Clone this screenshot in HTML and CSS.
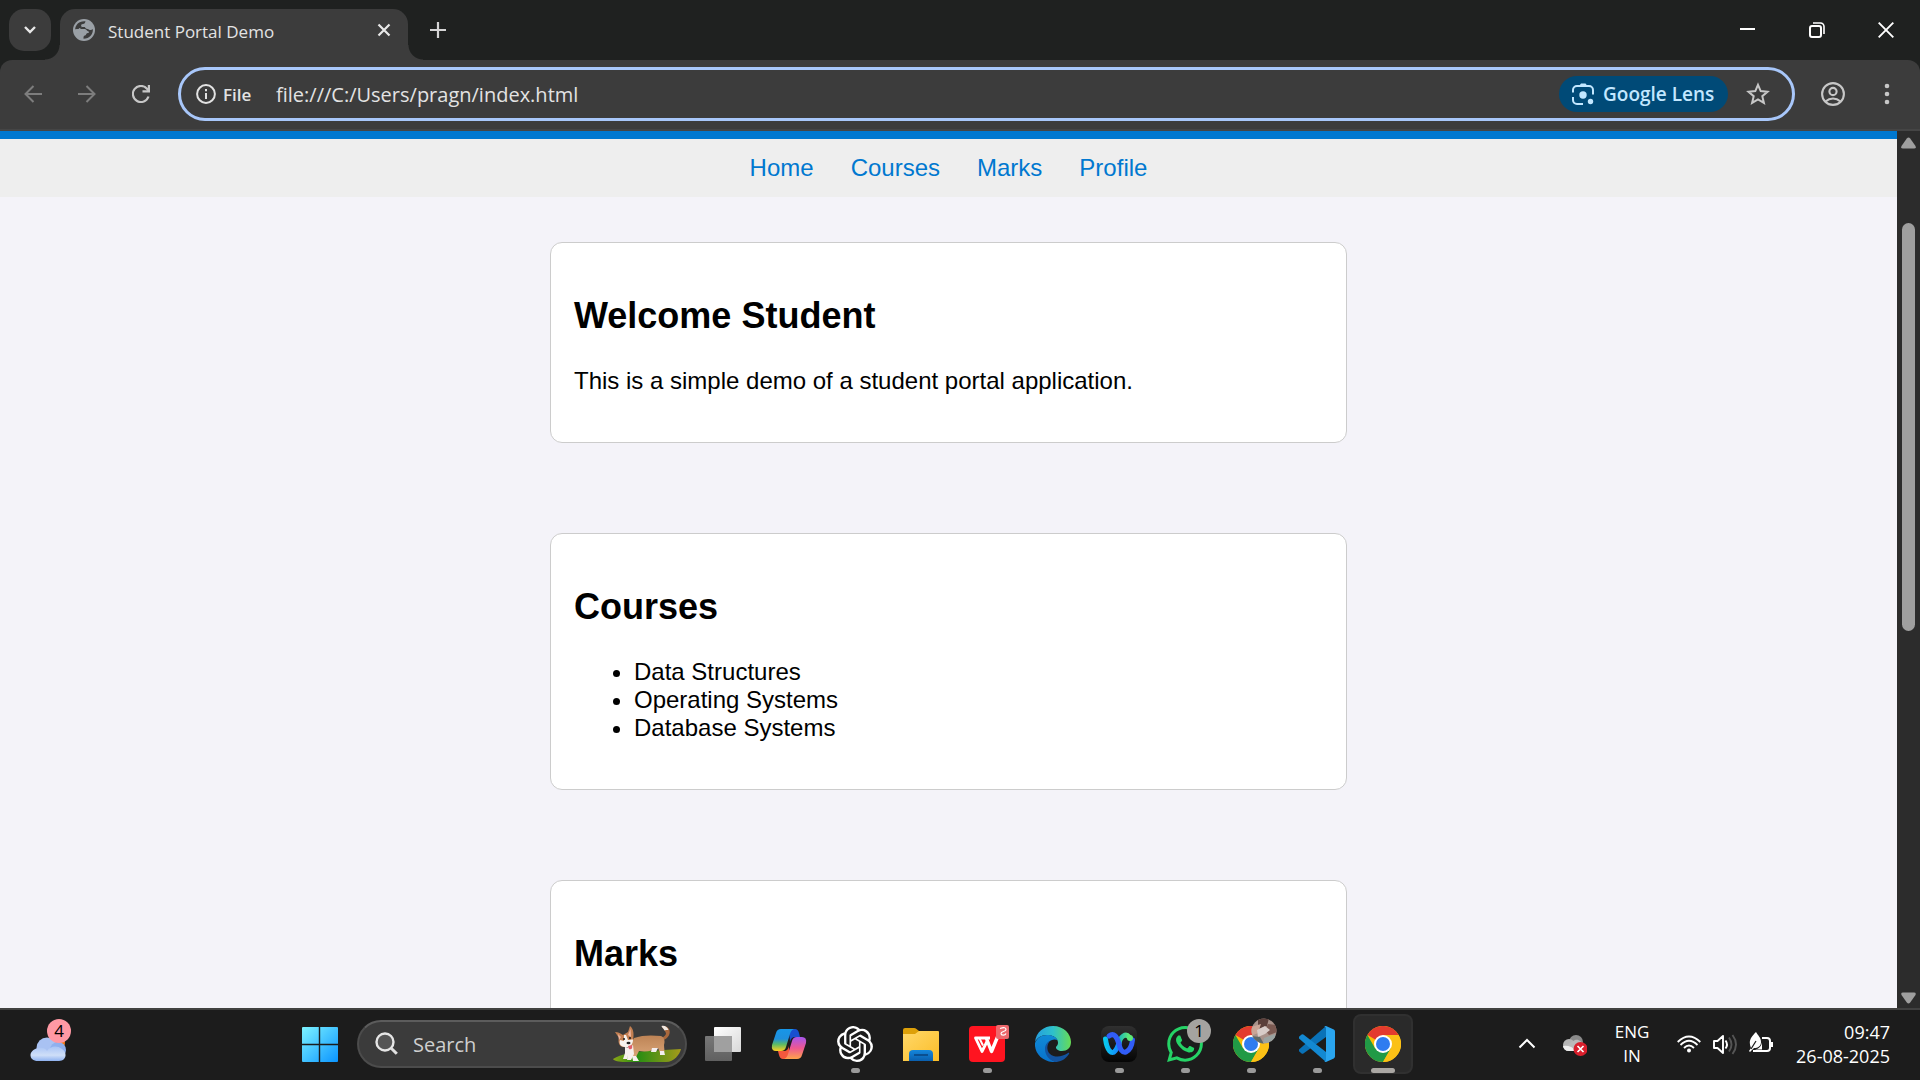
FILE: index.html
```html
<!DOCTYPE html>
<html lang="en">
<head>
<meta charset="utf-8">
<title>Student Portal Demo</title>
<link rel="stylesheet" href="styles.css">
</head>
<body>
<header class="tabstrip">
  <button class="tab-search" aria-label="Search tabs"><svg width="14" height="14" viewBox="0 0 14 14"><path d="M2 4l5 5 5-5" fill="none" stroke="#e8e8e8" stroke-width="2.4"/></svg></button>
  <div class="tab">
    <svg width="22" height="22" viewBox="0 0 22 22"><circle cx="11" cy="11" r="11" fill="#9aa0a6"/><path d="M12.500 2.200c-.3 1.300-1 2.800-2.500 2.800-1.700 0-2.500 1-1.500 2.500.5 1-.5 1.500-2 1.500L5.500 10l-3.300.5C2.200 6 6 1.500 12.500 2.200z" fill="#3c3c3c"/><path d="M2.200 10.500l3.300-.5c3 0 6 0 7.500 1 1 1 .5 2.500-1 2.500-1.500.5-1.500 2-2.500 3-1 .8-1 2-1 3C4.500 18.200 2 14.800 2.200 10.500z" fill="#9aa0a6"/><path d="M7 10h5c1.500 0 2 2.500 3.500 2.500 1 0 .5 1.500-.5 1.500-2 0-1.500 2-3 2.500-1.500 0-1.500 1.500-1.500 3.300 6 0 10-5 9.300-9.800-1 1-2.500 1.500-4 .5-1.500-1-3.500-.5-4-2.500H8.500z" fill="#3c3c3c"/></svg>
    <span class="tab-title">Student Portal Demo</span>
    <button class="plain tab-close" aria-label="Close tab"><svg width="14" height="14" viewBox="0 0 14 14"><path d="M1.500 1.500l11 11M12.500 1.500l-11 11" stroke="#e8e8e8" stroke-width="2.200"/></svg></button>
  </div>
  <button class="plain new-tab" aria-label="New tab"><svg width="16" height="16" viewBox="0 0 16 16"><path d="M8 0v16M0 8h16" stroke="#d5d5d5" stroke-width="2.200"/></svg></button>
  <div class="window-controls">
    <button class="plain" aria-label="Minimize"><svg width="16" height="16" viewBox="0 0 16 16"><path d="M0 7h15" stroke="#fff" stroke-width="2"/></svg></button>
    <button class="plain" aria-label="Restore"><svg width="16" height="16" viewBox="0 0 16 16"><rect x="1" y="4" width="11" height="11" rx="2" fill="none" stroke="#fff" stroke-width="2"/><path d="M4 1h7.500a3.500 3.500 0 0 1 3.500 3.500V12" fill="none" stroke="#fff" stroke-width="1.600"/></svg></button>
    <button class="plain" aria-label="Close"><svg width="16" height="16" viewBox="0 0 16 16"><path d="M.7.7l14.600 14.600M15.300.7L.7 15.300" stroke="#fff" stroke-width="1.900"/></svg></button>
  </div>
</header>

<div class="toolbar">
  <div class="nav-buttons">
    <button class="plain" aria-label="Back"><svg width="18" height="18" viewBox="0 0 18 18"><path d="M18 9H1.500M9.500 1L1.500 9l8 8" fill="none" stroke="#7d7d7d" stroke-width="2"/></svg></button>
    <button class="plain" aria-label="Forward"><svg width="18" height="18" viewBox="0 0 18 18"><path d="M0 9h16.500M8.500 1l8 8-8 8" fill="none" stroke="#7d7d7d" stroke-width="2"/></svg></button>
    <button class="plain" aria-label="Reload"><svg width="18" height="18" viewBox="0 0 18 18"><path d="M16.500 11.500A8 8 0 1 1 15 3.800l1.500 1.700" fill="none" stroke="#c7c7c7" stroke-width="2.200"/><path d="M18 0v7.500h-7.500V5.300h5.300V0z" fill="#c7c7c7"/></svg></button>
  </div>
  <div class="omnibox">
    <svg width="20" height="20" viewBox="0 0 20 20"><circle cx="10" cy="10" r="8.900" fill="none" stroke="#e3e3e3" stroke-width="2"/><path d="M9 9h2v6H9zM9 5h2v2.200H9z" fill="#e3e3e3"/></svg>
    <label class="scheme" for="url">File</label>
    <input class="url" id="url" type="text" value="file:///C:/Users/pragn/index.html">
    <button class="lens"><svg width="22" height="22" viewBox="0 0 22 22"><g fill="none" stroke="#c2e7ff" stroke-width="2"><path d="M1 9.500V7a4 4 0 0 1 4-4h12a4 4 0 0 1 4 4v4.500M1 14v3a4 4 0 0 0 4 4h6"/></g><path d="M7 3L9 .5h4.500l2 2.500z" fill="#c2e7ff"/><circle cx="11" cy="12" r="3.700" fill="#c2e7ff"/><circle cx="18.500" cy="18.500" r="2.700" fill="#c2e7ff"/></svg>Google Lens</button>
    <button class="plain star" aria-label="Bookmark this tab"><svg width="24" height="24" viewBox="0 0 24 24"><path d="M12 2.800l2.700 6.300 6.800.6-5.200 4.500 1.600 6.700L12 17.300l-5.900 3.600 1.600-6.700-5.200-4.500 6.800-.6z" fill="none" stroke="#c7c7c7" stroke-width="2"/></svg></button>
  </div>
  <button class="plain" aria-label="Profile"><svg width="24" height="24" viewBox="0 0 24 24"><g fill="none" stroke="#c7c7c7" stroke-width="2.100"><circle cx="12" cy="12" r="10.900"/><circle cx="12" cy="9.500" r="3.600"/><path d="M4.500 19.500c4.500-4 10.500-4 15 0"/></g></svg></button>
  <button class="plain menu" aria-label="Menu"><svg width="6" height="22" viewBox="0 0 6 22"><g fill="#c7c7c7"><circle cx="3" cy="3" r="2.300"/><circle cx="3" cy="11" r="2.300"/><circle cx="3" cy="19" r="2.300"/></g></svg></button>
</div>

<div class="viewport">
  <main class="page">
    <nav class="site-nav"><a href="#home">Home</a><a href="#courses">Courses</a><a href="#marks">Marks</a><a href="#profile">Profile</a></nav>
    <section class="card" id="home">
      <h2>Welcome Student</h2>
      <p>This is a simple demo of a student portal application.</p>
    </section>
    <section class="card" id="courses">
      <h2>Courses</h2>
      <ul><li>Data Structures</li><li>Operating Systems</li><li>Database Systems</li></ul>
    </section>
    <section class="card" id="marks">
      <h2>Marks</h2>
    </section>
  </main>
  <div class="scrollbar">
    <svg width="15" height="12" viewBox="0 0 15 12"><path d="M5.800 1.500q1.700-2.200 3.400 0l5.300 7.500q1 2.400-1.500 2.500H2Q-.5 11.400.5 9z" fill="#9f9f9f"/></svg>
    <div class="track"><div class="thumb"></div></div>
    <svg width="15" height="12" viewBox="0 0 15 12"><path d="M5.800 10.500q1.700 2.200 3.400 0L14.500 3q1-2.400-1.500-2.500H2Q-.5.600.5 3z" fill="#9f9f9f"/></svg>
  </div>
</div>

<footer class="taskbar">
  <button class="app weather" aria-label="Widgets"><svg width="36" height="36" viewBox="0 0 36 36"><defs><linearGradient id="cl" x2="0" y2="1"><stop offset="0" stop-color="#a9c4f5"/><stop offset=".6" stop-color="#cfdff8"/><stop offset="1" stop-color="#8fb2f0"/></linearGradient></defs><circle cx="26" cy="17" r="9" fill="#f57c14"/><circle cx="17" cy="22" r="10.500" fill="#a9c2f3"/><circle cx="28" cy="24" r="8" fill="#8fb0ee"/><path d="M8 22c5-1 8 1 9 3 3-5 10-6 15-2 6 4 4 12-3 12H8C-2 35-2 24 8 22z" fill="url(#cl)"/></svg><span class="badge pink">4</span></button>
  <div class="apps">
    <button class="app" aria-label="Start"><svg width="36" height="36" viewBox="0 0 36 36"><defs><linearGradient id="win" x2="1" y2="1"><stop offset="0" stop-color="#7df3ff"/><stop offset="1" stop-color="#0a94ff"/></linearGradient></defs><path d="M1 1h34a1 1 0 0 1 1 1v33a1 1 0 0 1-1 1H1a1 1 0 0 1-1-1V2a1 1 0 0 1 1-1z" fill="url(#win)"/><path d="M17.500 1v35M0 18.500h36" stroke="#1c1c1c" stroke-width="1.400"/></svg></button>
    <label class="search">
      <svg width="24" height="24" viewBox="0 0 24 24"><circle cx="10" cy="10" r="8.500" fill="#555" stroke="#e6e6e6" stroke-width="2.400"/><path d="M16.200 16.200l5.600 5.600" stroke="#e0e0e0" stroke-width="3"/></svg>
      <input type="text" placeholder="Search" aria-label="Search">
      <svg class="corgi" width="69" height="38" viewBox="0 0 69 38"><defs><linearGradient id="gr" x2="1"><stop offset="0" stop-color="#8da516"/><stop offset=".35" stop-color="#258d12"/><stop offset="1" stop-color="#a59a1b"/></linearGradient><linearGradient id="fur" x2="0" y2="1"><stop offset="0" stop-color="#bd8355"/><stop offset="1" stop-color="#d9a578"/></linearGradient></defs><path d="M0 34c8-5 20-7 33-8l35-2c-1 5-7 13-15 13H12c-6 0-11-1-12-3z" fill="url(#gr)"/><path d="M46 13c4 0 6-2 7-4 0-3-3-5-4-7 1-2 5-1 7 2 2 4 0 9-7 12z" fill="#a9683c"/><path d="M48.500 1c3-1 6 1 7 4-2 0-3-.5-4 .5-.5-2-3-3-3-4.500z" fill="#efe6e0"/><path d="M21 13c8-3 18-3 27-2 4 2 4 6 3 9 0 3 1 6 0 8h-4l-2-5c-5 3-12 4-19 3l-3 6h-5l-3-9z" fill="url(#fur)"/><path d="M39 23l-1 4h5l2-4zM47 26v4h5l-1-4z" fill="#f4eeee"/><path d="M2 7c3 0 5 1 8 3l5-3 2-6c4 3 4 9 3 14s-5 8-9 7c-6 0-6-7-5-9z" fill="#c27f52"/><path d="M5 9l3 3-2 3zM17.500 4l-2.500 6 3 2z" fill="#efb7a1"/><path d="M11 10l2 0 2 5c3 0 5-1 5 0 0 5-4 8-8 7-5 0-6-4-5-7l4 1z" fill="#f7f2ee"/><path d="M12 22c3 1 6 0 8-2l1 9-3 6h-4l1-5-1 4h-4l2-6z" fill="#f6efed"/><path d="M19 31h4l3 5h-6z" fill="#f6efed"/><circle cx="11" cy="14" r="1.100" fill="#222"/><circle cx="17" cy="13" r="1.100" fill="#222"/><ellipse cx="15.500" cy="18" rx="2" ry="1.300" fill="#222"/><path d="M15 21l4-1c1 4-1 5-3 4z" fill="#e0606b"/></svg>
    </label>
    <button class="app" aria-label="Task view"><svg width="36" height="36" viewBox="0 0 36 36"><defs><linearGradient id="tv" x2="1" y2="1"><stop offset="0" stop-color="#fff"/><stop offset="1" stop-color="#d8d8d8"/></linearGradient><linearGradient id="tg" x2="0" y2="1"><stop offset="0" stop-color="#777"/><stop offset="1" stop-color="#606060"/></linearGradient></defs><rect y="10" width="27" height="25" rx="1" fill="url(#tg)"/><rect x="9" y="1" width="27" height="25" rx="1" fill="url(#tv)"/><path d="M9 10h18v16H9z" fill="#a0a0a0"/></svg></button>
    <button class="app" aria-label="Copilot"><svg width="36" height="36" viewBox="0 0 36 36"><defs><linearGradient id="c1" x2="0" y2="1"><stop offset="0" stop-color="#1796e8"/><stop offset=".45" stop-color="#1f8fdc"/><stop offset=".7" stop-color="#5dbb64"/><stop offset="1" stop-color="#ffd020"/></linearGradient><linearGradient id="c2" x2="0" y2="1"><stop offset="0" stop-color="#a556ee"/><stop offset=".5" stop-color="#ee5792"/><stop offset="1" stop-color="#ffa34a"/></linearGradient></defs><path d="M18 3h6q3 0 4 4l1 4h-5q-4 0-5 5z" fill="#174fd0"/><path d="M18 33h-6q-3 0-4-4l-1-4h6q4 0 5-5z" fill="#f4583d"/><path d="M10 3h13q-3 1-4 5l-4 13q-1 4-5 4H5q-5 0-4-6l4-12q1-4 5-4z" fill="url(#c1)"/><path d="M26 33H13q3-1 4-5l4-13q1-4 5-4h5q5 0 4 6l-4 12q-1 4-5 4z" fill="url(#c2)"/></svg></button>
    <button class="app running" aria-label="ChatGPT"><svg width="36" height="36" viewBox="0 0 24 24"><path fill="#fff" d="M22.2819 9.8211a5.9847 5.9847 0 0 0-.5157-4.9108 6.0462 6.0462 0 0 0-6.5098-2.9A6.0651 6.0651 0 0 0 4.9807 4.1818a5.9847 5.9847 0 0 0-3.9977 2.9 6.0462 6.0462 0 0 0 .7427 7.0966 5.98 5.98 0 0 0 .511 4.9107 6.051 6.051 0 0 0 6.5146 2.9001A5.9847 5.9847 0 0 0 13.2599 24a6.0557 6.0557 0 0 0 5.7718-4.2058 5.9894 5.9894 0 0 0 3.9977-2.9001 6.0557 6.0557 0 0 0-.7475-7.0729zm-9.022 12.6081a4.4755 4.4755 0 0 1-2.8764-1.0408l.1419-.0804 4.7783-2.7582a.7948.7948 0 0 0 .3927-.6813v-6.7369l2.02 1.1686a.071.071 0 0 1 .038.052v5.5826a4.504 4.504 0 0 1-4.4945 4.4944zm-9.6607-4.1254a4.4708 4.4708 0 0 1-.5346-3.0137l.142.0852 4.783 2.7582a.7712.7712 0 0 0 .7806 0l5.8428-3.3685v2.3324a.0804.0804 0 0 1-.0332.0615L9.74 19.9502a4.4992 4.4992 0 0 1-6.1408-1.6464zM2.3408 7.8956a4.485 4.485 0 0 1 2.3655-1.9728V11.6a.7664.7664 0 0 0 .3879.6765l5.8144 3.3543-2.0201 1.1685a.0757.0757 0 0 1-.071 0l-4.8303-2.7865A4.504 4.504 0 0 1 2.3408 7.872zm16.5963 3.8558L13.1038 8.364 15.1192 7.2a.0757.0757 0 0 1 .071 0l4.8303 2.7913a4.4944 4.4944 0 0 1-.6765 8.1042v-5.6772a.79.79 0 0 0-.407-.667zm2.0107-3.0231l-.142-.0852-4.7735-2.7818a.7759.7759 0 0 0-.7854 0L9.409 9.2297V6.8974a.0662.0662 0 0 1 .0284-.0615l4.8303-2.7866a4.4992 4.4992 0 0 1 6.6802 4.66zM8.3065 12.863l-2.02-1.1638a.0804.0804 0 0 1-.038-.0567V6.0742a4.4992 4.4992 0 0 1 7.3757-3.4537l-.142.0805L8.704 5.459a.7948.7948 0 0 0-.3927.6813zm1.0976-2.3654l2.602-1.4998 2.6069 1.4998v2.9994l-2.5974 1.4997-2.6067-1.4997Z"/></svg></button>
    <button class="app" aria-label="File Explorer"><svg width="36" height="36" viewBox="0 0 36 36"><defs><linearGradient id="fo" x2="1" y2="1"><stop offset="0" stop-color="#ffd869"/><stop offset="1" stop-color="#fbbd28"/></linearGradient><linearGradient id="fb" x2="0" y2="1"><stop offset="0" stop-color="#1487dc"/><stop offset="1" stop-color="#0a5fae"/></linearGradient></defs><path d="M0 4q0-2 2-2h9q1.500 0 2.500 1L16 5v5H0z" fill="#dda009"/><path d="M0 8h12l4-3h19q1 0 1 1v29H0z" fill="url(#fo)"/><path d="M6 35V28q0-4 4-4h16q4 0 4 4v7z" fill="url(#fb)"/><path d="M11 29h14" stroke="#0a4f90" stroke-width="2"/></svg></button>
    <button class="app running" aria-label="WPS Office"><svg width="36" height="36" viewBox="0 0 36 36"><rect width="36" height="36" rx="4" fill="#ff1420"/><g fill="none" stroke="#fff" stroke-width="2.800" stroke-linejoin="round"><path d="M21 12H6.500L13 25.500l5.500-11"/><path d="M17.500 12.500l5 13L28.500 11" stroke-width="3.400"/><path d="M10.500 12.500l3.500 7" stroke-width="2"/></g></svg><svg class="corner" width="13" height="14" viewBox="0 0 13 14"><rect width="13" height="14" rx="2" fill="#ed686c"/><path d="M4 3.500q6-2 6 1c0 2.500-5 1.500-5 4 0 2 4 2.500 5 0" fill="none" stroke="#fff" stroke-width="1.200"/></svg></button>
    <button class="app" aria-label="Microsoft Edge"><svg width="36" height="36" viewBox="0 0 36 36"><defs><linearGradient id="e1" x2="1"><stop offset="0" stop-color="#249ee0"/><stop offset=".5" stop-color="#2ec0cb"/><stop offset="1" stop-color="#67dc55"/></linearGradient><linearGradient id="e2" x2="0" y2="1"><stop offset="0" stop-color="#108ad6"/><stop offset="1" stop-color="#0872cc"/></linearGradient></defs><path d="M0 16C1 6 9 0 18 0c11 0 18 8 18 16 0 6-4 9-9 9-4 0-6-2-6-3.500s2-1.500 2-5C23 12 18 9 12 9 6 9 2 12 0 16z" fill="url(#e1)"/><path d="M0 17C2 12 6 9 12 9c5 0 9 2 10.500 5C17 12 11 16 11 23c0 6 4 11 10 13C9 37-1 28 0 17z" fill="url(#e2)"/><path d="M15 15c-3 3-4 9 0 13 5 4 12 3 18-1 1-.5 1.500 0 1 1-4 6-9 8-14 8-6-2-10-7-10-13 0-4 2-7 5-8z" fill="#13539f"/></svg></button>
    <button class="app running" aria-label="Webex"><svg width="36" height="36" viewBox="0 0 36 36"><defs><linearGradient id="wbg" x2="0" y2="1"><stop offset="0" stop-color="#303030"/><stop offset="1" stop-color="#050505"/></linearGradient><linearGradient id="wl" x2="1"><stop offset="0" stop-color="#08c8ef"/><stop offset="1" stop-color="#1684ff"/></linearGradient><linearGradient id="wr" x2="1"><stop offset="0" stop-color="#18b7ba"/><stop offset="1" stop-color="#60e878"/></linearGradient></defs><rect width="36" height="36" rx="8" fill="url(#wbg)"/><g fill="none" stroke-width="5" stroke-linecap="round"><path d="M18 18c1-8 7-11 10-7" stroke="url(#wr)"/><path d="M4.500 13C6 25 11 29 14 25c2-2 3-5 4-8" stroke="url(#wl)"/><path d="M8 10c5-4 8 1 10 8 1 5 3 9 7 8 4-2 6-7 6.500-12" stroke="#315df7"/></g><circle cx="29" cy="12" r="3" fill="#5ce877"/></svg></button>
    <button class="app running" aria-label="WhatsApp"><svg width="36" height="36" viewBox="0 0 24 24"><path fill="#25d366" d="M17.472 14.382c-.297-.149-1.758-.867-2.03-.967-.273-.099-.471-.148-.67.15-.197.297-.767.966-.94 1.164-.173.199-.347.223-.644.075-.297-.15-1.255-.463-2.39-1.475-.883-.788-1.48-1.761-1.653-2.059-.173-.297-.018-.458.13-.606.134-.133.298-.347.446-.52.149-.174.198-.298.298-.497.099-.198.05-.371-.025-.52-.075-.149-.669-1.612-.916-2.207-.242-.579-.487-.5-.669-.51-.173-.008-.371-.01-.57-.01-.198 0-.52.074-.792.372-.272.297-1.04 1.016-1.04 2.479 0 1.462 1.065 2.875 1.213 3.074.149.198 2.096 3.2 5.077 4.487.709.306 1.262.489 1.694.625.712.227 1.36.195 1.871.118.571-.085 1.758-.719 2.006-1.413.248-.694.248-1.289.173-1.413-.074-.124-.272-.198-.57-.347m-5.421 7.403h-.004a9.870 9.870 0 01-5.031-1.378l-.361-.214-3.741.982.998-3.648-.235-.374a9.860 9.860 0 01-1.510-5.260c.001-5.450 4.436-9.884 9.888-9.884 2.640 0 5.122 1.030 6.988 2.898a9.825 9.825 0 012.893 6.994c-.003 5.450-4.437 9.884-9.885 9.884m8.413-18.297A11.815 11.815 0 0012.050 0C5.495 0 .160 5.335.157 11.892c0 2.096.547 4.142 1.588 5.945L.057 24l6.305-1.654a11.882 11.882 0 005.683 1.448h.005c6.554 0 11.890-5.335 11.893-11.893a11.821 11.821 0 00-3.480-8.413z"/></svg><span class="badge">1</span></button>
    <button class="app running" aria-label="Chrome, personal profile"><svg width="36" height="36" viewBox="0 0 36 36"><g id="chrome"><circle cx="18" cy="18" r="18" fill="#fbbc05"/><path d="M18 18L33.600 9A18 18 0 0 0 2.400 9z" fill="#e33b2e"/><path d="M33.600 9H18v9z" fill="#e33b2e"/><path d="M2.400 9A18 18 0 0 0 18 36l7.800-13.500L18 18l-7.800 4.500z" fill="#219a46"/><path d="M25.800 22.500L18 36A18 18 0 0 0 33.600 9H18z" fill="#fbc116"/><circle cx="18" cy="18" r="9" fill="#fff"/><circle cx="18" cy="18" r="7" fill="#2f7cf0"/></g></svg><svg class="corner avatar" width="26" height="26" viewBox="0 0 26 26"><defs><clipPath id="av"><circle cx="13" cy="13" r="12.500"/></clipPath></defs><g clip-path="url(#av)"><path d="M0 0h26v26H0z" fill="#a8928a"/><path d="M7 0h11l-2 8-9 3z" fill="#5b3f3a"/><path d="M0 9l10-3-3 9-7 3z" fill="#c9a596"/><path d="M17 6l9 1v7l-8 3-4-5z" fill="#7b5a52"/><path d="M6 12l8-4 5 4-5 4-7 3z" fill="#d8ccc8"/><path d="M0 18l9 1 4 7H0z" fill="#5f6a68"/><path d="M13 20l11-4v9H12z" fill="#99a3a1"/></g></svg></button>
    <button class="app running" aria-label="Visual Studio Code"><svg width="36" height="36" viewBox="0 0 36 36"><path d="M27 0L0 23.500q-.6.800 0 1.700l2.600 2.300q.8.600 1.800 0L27 11z" fill="#0a72b8"/><path d="M27 36L0 12.500q-.6-.8 0-1.700l2.600-2.300q.8-.6 1.800 0L27 26z" fill="#1389d2"/><path d="M27 0l7.800 3.600Q36 4.200 36 5.500v25q0 1.300-1.200 1.900L27 36q-1 .3-2-.7 2 1 2-1.800V2.500q0-2.500-2-1.800 1-1 2-.7z" fill="#2aa5ef"/></svg></button>
    <button class="app running active" aria-label="Google Chrome"><svg width="36" height="36" viewBox="0 0 36 36"><use href="#chrome"/></svg></button>
  </div>
  <div class="tray">
    <button class="plain" aria-label="Show hidden icons"><svg width="24" height="24" viewBox="0 0 24 24"><path d="M4.500 15.500L12 8l7.500 7.500" fill="none" stroke="#fff" stroke-width="2"/></svg></button>
    <button class="plain" aria-label="OneDrive"><svg width="24" height="24" viewBox="0 0 24 24"><circle cx="13" cy="10" r="7" fill="#8a8a8a"/><circle cx="6" cy="13" r="6" fill="#b5b5b5"/><path d="M0 14c5-1 8-4 12-6 4-1 7 2 8 5v6H6q-5 0-6-5z" fill="#bababa"/><path d="M0 14q8-1 13 5H6q-5 0-6-5z" fill="#eee"/><circle cx="17.500" cy="17" r="7" fill="#d91f2c"/><path d="M14.500 14l6 6M20.500 14l-6 6" stroke="#fff" stroke-width="1.700"/></svg></button>
    <button class="plain lang">ENG<br>IN</button>
    <button class="plain status" aria-label="Network, volume and battery">
      <svg width="24" height="24" viewBox="0 0 24 24"><g fill="none" stroke="#fff" stroke-width="1.800"><path d="M.7 10Q12-1 23.300 10M3.500 13q8.500-8.500 17 0M7 16q5-5 10 0"/></g><circle cx="12" cy="18.500" r="2" fill="#fff"/></svg>
      <svg width="24" height="24" viewBox="0 0 24 24"><path d="M1 9h3.500L10 4v17l-5.500-5H1z" fill="none" stroke="#fff" stroke-width="1.900" stroke-linejoin="round"/><path d="M12.500 8.500q3 4 0 8" fill="none" stroke="#fff" stroke-width="1.900"/><path d="M16 5.500q5 7 0 14M19.500 3q7 9.500 0 19" fill="none" stroke="#555" stroke-width="1.900"/></svg>
      <svg width="24" height="24" viewBox="0 0 24 24"><path d="M13 6h5q3 0 3 3v7q0 3-3 3H4" fill="none" stroke="#fff" stroke-width="2"/><path d="M21 10h3v5h-3z" fill="#fff"/><path d="M7 0c2 4 5 5 5 10 0 4-3 6-7 6L1 20l-1-1 2-3C-1 9 2 5 7 0z" fill="#fff"/><path d="M2 17l5-8" stroke="#1c1c1c" stroke-width="1.200"/><path d="M6 17.500q6-1 7-7v7z" fill="#fff"/></svg>
    </button>
    <button class="plain clock">09:47<br>26-08-2025</button>
  </div>
</footer>
</body>
</html>
```
FILE: styles.css
```css
* { box-sizing: border-box; }

body {
  margin: 0;
  height: 100vh;
  display: flex;
  flex-direction: column;
  overflow: hidden;
  background: #1f2120;
  font-family: "Open Sans", "Noto Sans", sans-serif;
}

svg { display: block; flex: none; }

button, input { font: inherit; color: inherit; }

.plain {
  display: flex;
  align-items: center;
  justify-content: center;
  padding: 0;
  border: 0;
  background: none;
}

/* Tab strip */
.tabstrip {
  display: flex;
  height: 60px;
  flex: none;
  color: #e3e3e3;
}

.tab-search {
  display: flex;
  align-items: center;
  justify-content: center;
  width: 42px;
  height: 42px;
  margin: 9px 9px 0;
  padding: 0;
  border: 0;
  border-radius: 15px;
  background: #3c3c3c;
}

.tab {
  position: relative;
  display: flex;
  align-items: center;
  gap: 13px;
  width: 348px;
  height: 51px;
  margin-top: 9px;
  padding: 0 12px 9px 13px;
  border-radius: 15px 15px 0 0;
  background: #3c3c3c;
}

.tab::before,
.tab::after {
  content: "";
  position: absolute;
  bottom: 0;
  width: 15px;
  height: 15px;
}

.tab::before {
  right: 100%;
  background: radial-gradient(circle at 0 0, transparent 14px, #3c3c3c 15px);
}

.tab::after {
  left: 100%;
  background: radial-gradient(circle at 100% 0, transparent 14px, #3c3c3c 15px);
}

.tab-title { flex: 1; font-size: 17px; line-height: 24px; padding-top: 4px; white-space: nowrap; }
.tab-close { width: 24px; height: 24px; }
.new-tab { width: 60px; height: 60px; }

.window-controls { display: flex; margin-left: auto; }
.window-controls .plain { width: 69px; height: 59px; }

/* Toolbar */
.toolbar {
  display: flex;
  align-items: center;
  height: 71px;
  flex: none;
  padding: 0 15px 1px;
  border-bottom: 2px solid #454545;
  border-radius: 12px 12px 0 0;
  background: #3c3c3c;
  color: #e3e3e3;
}

.nav-buttons { display: flex; gap: 18px; margin-right: 19px; }
.toolbar .plain { width: 36px; height: 36px; }

.omnibox {
  display: flex;
  align-items: center;
  flex: 1;
  height: 54px;
  margin-right: 20px;
  padding: 0 16px 0 15px;
  border: 3px solid #a8c7fa;
  border-radius: 27px;
}

.scheme { width: 53px; margin-left: 7px; font-size: 17px; font-weight: 600; }

.url {
  flex: 1;
  min-width: 0;
  padding: 0;
  border: 0;
  outline: 0;
  background: none;
  font-size: 20px;
}

.lens {
  display: flex;
  align-items: center;
  gap: 9px;
  width: 169px;
  height: 36px;
  margin-right: 12px;
  padding: 0 13px;
  border: 0;
  border-radius: 18px;
  background: #004a77;
  color: #c2e7ff;
  font-size: 19px;
  font-weight: 600;
  white-space: nowrap;
}

.toolbar .menu { margin-left: 18px; }

/* Web page */
.viewport { display: flex; flex: 1; min-height: 0; }

.page {
  flex: 1;
  overflow: hidden;
  border-top: 8px solid #0078d0;
  background: #f4f3f9;
  color: #000;
  font: 24px/28px "Liberation Sans", Arial, sans-serif;
}

.site-nav {
  display: flex;
  justify-content: center;
  gap: 37px;
  padding: 15px;
  background: #eee;
}

.site-nav a { color: #0078d0; text-decoration: none; }

.card {
  max-width: 797px;
  margin: 45px auto 90px;
  padding: 22px 23px 23px;
  border: 1px solid #ccc;
  border-radius: 12px;
  background: #fff;
}

.card h2 { margin: 30px 0; font-size: 36px; line-height: 42px; }
.card p, .card ul { margin: 0 0 24px; }
.card ul { padding-left: 60px; }

.scrollbar {
  display: flex;
  flex-direction: column;
  align-items: center;
  width: 23px;
  padding: 6px 0 4px;
  background: #2c2c2c;
}

.track { flex: 1; padding-top: 74px; }
.thumb { width: 13px; height: 53%; border-radius: 7px; background: #9f9f9f; }

/* Taskbar */
.taskbar {
  display: flex;
  height: 72px;
  flex: none;
  padding: 4px 30px 0 18px;
  border-top: 2px solid #414141;
  background: #1c1c1c;
  color: #fff;
}

.app {
  position: relative;
  display: flex;
  align-items: center;
  justify-content: center;
  width: 60px;
  height: 60px;
  flex: none;
  padding: 0;
  border: 0;
  border-radius: 8px;
  background: none;
}

.weather { margin-right: 212px; }
.apps { display: flex; gap: 6px; }

.running::after {
  content: "";
  position: absolute;
  bottom: 1px;
  left: 50%;
  width: 9px;
  height: 5px;
  margin-left: -4px;
  border-radius: 3px;
  background: #9a9a9a;
}

.active { border: 2px solid #303030; background: #2a2a2a; }
.active::after { bottom: -1px; width: 24px; margin-left: -12px; background: #aaa7a3; }

.badge {
  position: absolute;
  top: 5px;
  right: 4px;
  width: 24px;
  height: 24px;
  border-radius: 50%;
  background: #a5a3a0;
  color: #000;
  font-size: 17px;
  line-height: 24px;
}

.badge.pink { right: 7px; background: #ff99a4; }
.corner { position: absolute; top: 11px; right: 8px; }
.avatar { top: 4px; right: 4px; }

.search {
  display: flex;
  align-items: center;
  width: 330px;
  height: 48px;
  margin: 6px 0 6px 1px;
  padding: 0 3px 0 16px;
  border: 2px solid #4c4c4c;
  border-top-color: #5c5c5c;
  border-radius: 24px;
  background: #3b3b3b;
}

.search input {
  flex: 1;
  min-width: 0;
  padding: 0 0 0 14px;
  border: 0;
  outline: 0;
  background: none;
  font-size: 20px;
}

.search input::placeholder { color: #cfcfcf; opacity: 1; }

.tray {
  display: flex;
  align-items: center;
  gap: 24px;
  height: 60px;
  margin-left: auto;
  font-size: 17px;
  line-height: 24px;
}

.lang { width: 42px; }
.status { gap: 12px; }
.clock { width: 93px; text-align: right; justify-content: flex-end; white-space: nowrap; font-size: 18px; }
```
